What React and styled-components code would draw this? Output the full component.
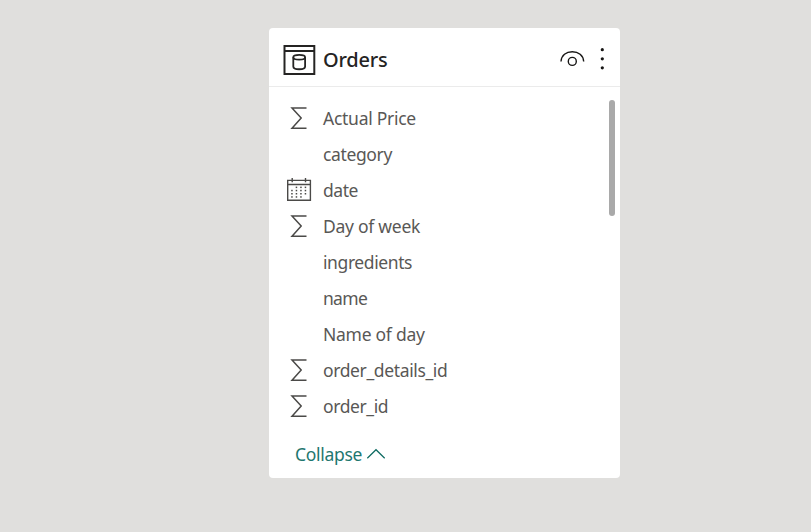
import React from 'react';
import styled, { createGlobalStyle } from 'styled-components';

const GlobalStyle = createGlobalStyle`
  * { box-sizing: border-box; }
  body { margin: 0; background: #e0dfdd; font-family: "Noto Sans", "Open Sans", sans-serif; }
`;

const Canvas = styled.main`
  display: flex;
  height: 532px;
  padding: 28px 0 0 269px;
  background: #e0dfdd;
`;

const Card = styled.section`
  display: flex;
  flex-direction: column;
  width: 351px;
  height: 450px;
  border-radius: 4px;
  background: #fff;
  overflow: hidden;
`;

const Header = styled.header`
  display: flex;
  align-items: center;
  height: 59px;
  padding: 6px 14px 0 14px;
  border-bottom: 1px solid #ebebeb;
`;

const Label = styled.span`
  white-space: pre;
  letter-spacing: ${(p) => p.$spacing || 0}px;
`;

const Title = styled.h2`
  flex: 1;
  margin: 0 0 0 7px;
  font-size: 20px;
  font-weight: 500;
  line-height: 28px;
  color: #252423;
`;

const IconButton = styled.button`
  display: flex;
  padding: 0;
  border: 0;
  background: none;
  margin-left: ${(p) => p.$gap || 0}px;
`;

const Body = styled.div`
  display: flex;
  justify-content: space-between;
  height: 344px;
  padding: 13px 5px 0 18px;
`;

const FieldList = styled.ul`
  margin: 0;
  padding: 0;
  list-style: none;
`;

const Field = styled.li`
  display: flex;
  align-items: center;
  height: 36px;
  font-size: 17.5px;
  font-weight: 400;
  line-height: 36px;
  color: #595856;
`;

const IconSlot = styled.span`
  display: flex;
  width: 36px;
  height: 36px;
`;

const ScrollThumb = styled.div`
  width: 6px;
  height: 116px;
  border-radius: 3px;
  background: #a9a9a9;
`;

const Collapse = styled.button`
  display: flex;
  align-items: center;
  align-self: flex-start;
  height: 36px;
  margin: 5px 0 0 26px;
  padding: 0;
  border: 0;
  background: none;
  font-family: inherit;
  font-size: 17.5px;
  color: #1f776f;
`;

const TableIcon = () => (
  <svg width="33" height="32" viewBox="283 44 33 32" fill="none" stroke="#252423" strokeWidth="2">
    <path d="M284.5 46H314.3V74H284.5ZM284.5 51H314.3" />
    <ellipse cx="299.2" cy="57.2" rx="5.9" ry="2.4" strokeWidth="1.8" />
    <path d="M293.3 57.2V66.4C293.3 70.2 305.1 70.2 305.1 66.4V57.2" strokeWidth="1.8" />
  </svg>
);

const EyeIcon = () => (
  <svg width="26" height="20" viewBox="559 49 26 20" fill="none" stroke="#171615" strokeWidth="1.4">
    <path d="M561 60.5C561.3 54.2 566.2 50.7 572.3 50.7S583.3 54.2 583.7 60.5" />
    <circle cx="572.3" cy="60.4" r="4" />
  </svg>
);

const MoreIcon = () => (
  <svg width="8" height="24" viewBox="598 48 8 24" fill="#171615">
    <circle cx="602.3" cy="49.7" r="1.6" />
    <circle cx="602.3" cy="58.8" r="1.6" />
    <circle cx="602.3" cy="67.8" r="1.6" />
  </svg>
);

const SigmaIcon = () => (
  <svg width="36" height="36" viewBox="287 100 36 36" fill="none" stroke="#4b4a48" strokeWidth="1.5">
    <path d="M306.5 108H292L301.2 118L292 128.2H306.5" />
  </svg>
);

const DOTS = [[1, 2, 3], [0, 1, 2, 3], [0, 1, 2, 3], [0, 1, 2]];

const CalendarIcon = () => (
  <svg width="36" height="36" viewBox="287 172 36 36" fill="none" stroke="#4b4a48" strokeWidth="1.4">
    <path d="M287.7 180.4H310.4V200.3H287.7ZM287.7 184.5H310.4M292.2 178V182.2M305.5 178V182.2" />
    <g fill="#4b4a48" stroke="none">
      {DOTS.map((row, r) =>
        row.map((c) => (
          <rect key={`${r}-${c}`} x={291.2 + c * 4.5} y={186.6 + r * 3.2} width="1.5" height="1.5" />
        ))
      )}
    </g>
  </svg>
);

const ChevronUpIcon = () => (
  <svg width="20" height="12" viewBox="366 447 20 12" fill="none" stroke="#0e6b62" strokeWidth="1.2">
    <path d="M367.3 457.3L376 448.7L384.7 457.3" />
  </svg>
);

const ICONS = { sum: SigmaIcon, calendar: CalendarIcon };

const FIELDS = [
  { name: 'Actual Price', icon: 'sum', spacing: -0.27 },
  { name: 'category', spacing: -0.37 },
  { name: 'date', icon: 'calendar', spacing: -0.45 },
  { name: 'Day of week', icon: 'sum', spacing: -0.27 },
  { name: 'ingredients', spacing: -0.4 },
  { name: 'name', spacing: -0.7 },
  { name: 'Name of day', spacing: -0.27 },
  { name: 'order_details_id', icon: 'sum', spacing: -0.37 },
  { name: 'order_id', icon: 'sum', spacing: -0.4 },
];

export default function App() {
  return (
    <>
      <GlobalStyle />
      <Canvas>
        <Card>
          <Header>
            <TableIcon />
            <Title><Label $spacing={-0.2}>Orders</Label></Title>
            <IconButton aria-label="Toggle visibility"><EyeIcon /></IconButton>
            <IconButton aria-label="More options" $gap={13}><MoreIcon /></IconButton>
          </Header>
          <Body>
            <FieldList>
              {FIELDS.map(({ name, icon, spacing }) => {
                const Icon = ICONS[icon];
                return (
                  <Field key={name}>
                    <IconSlot>{Icon && <Icon />}</IconSlot>
                    <Label $spacing={spacing}>{name}</Label>
                  </Field>
                );
              })}
            </FieldList>
            <ScrollThumb />
          </Body>
          <Collapse><Label $spacing={-0.3}>Collapse</Label><IconButton as="span" $gap={4}><ChevronUpIcon /></IconButton></Collapse>
        </Card>
      </Canvas>
    </>
  );
}
